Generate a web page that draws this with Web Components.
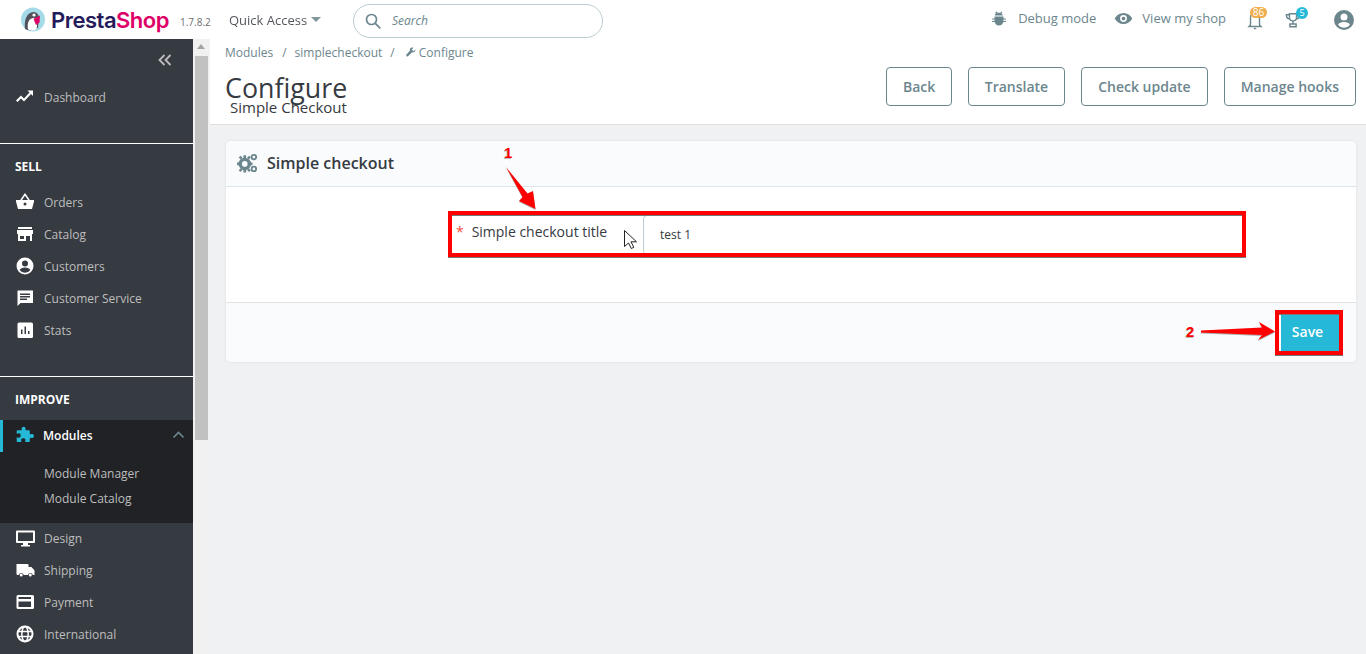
<!DOCTYPE html>
<html>
<head>
<meta charset="utf-8">
<title>Configure</title>
<style>
html,body{margin:0;height:654px;overflow:hidden;background:#eff1f2;font-family:"Open Sans",sans-serif}
</style>
</head>
<body>
<ps-app></ps-app>
<script>
const ICONS = {
  trend: `<path d="M1 13.500l5-5 3 3 5.500-6L12.500 3.500H18V9l-2-2-7 7.500-3-3-3.500 3.500z"/>`,
  basket: `<path d="M1 8h4.200L9.500 1.500h1L14.800 8H19v1.500l-2 7.500H3L1 9.500zM7 8h6l-3-4.300zM10 10.500a1.500 1.500 0 100 3 1.500 1.500 0 000-3z" fill-rule="evenodd"/>`,
  store: `<path d="M3 3h14v2H3zM2 6h16v2l0 2h-1v7h-2v-5h-4v5H3v-7H2zM5 12v3h4v-3z" fill-rule="evenodd"/>`,
  person: `<path d="M10 1.500a8.500 8.500 0 100 17 8.500 8.500 0 000-17zM10 4.500a3 3 0 110 6 3 3 0 010-6zM10 11.500c2.500 0 4.800 1 5.300 2.400A6.500 6.500 0 0110 16.800a6.500 6.500 0 01-5.300-2.900c.5-1.400 2.800-2.400 5.300-2.400z" fill-rule="evenodd"/>`,
  chat: `<path d="M2.500 2.500h15.500v12.500H5.500l-3 3zM5 5.500v1.500h10V5.500zM5 8v1.500h10V8zM5 10.500V12h7v-1.500z" fill-rule="evenodd"/>`,
  stats: `<path d="M4 2.500h12.500A1.500 1.500 0 0118 4v12.500a1.500 1.500 0 01-1.500 1.500H4a1.500 1.500 0 01-1.500-1.500V4A1.500 1.500 0 014 2.500zM6 9.500V14h1.500V9.500zM9.500 6.500V14H11V6.500zM13 11v3h1.500v-3z" fill-rule="evenodd"/>`,
  puzzle: `<path d="M7 2.500c2-1.500 4-.5 3.500 2-.1.500.3.800.8.800H14c.5 0 .8.300.8.800v2.700c0 .5.500.8 1 .5 2-1 3.500.5 3 2.200-.4 1.500-1.800 2-3 1.300-.5-.3-1 0-1 .5v3c0 .5-.3.800-.8.800h-3.200c-.8 0-.8-.6-.5-1.200.7-1.400-.3-2.700-2-2.700s-2.700 1.300-2 2.700c.3.600.2 1.200-.5 1.200H2.500c-.5 0-.8-.3-.8-.8v-3.200c0-.8.600-.9 1.200-.5 1.400.8 2.800-.2 2.800-2s-1.400-2.800-2.800-2c-.6.300-1.200.3-1.200-.5V6.100c0-.5.300-.8.800-.8H6c.6 0 .9-.4.700-.9-.3-.7-.2-1.400.3-1.900z"/>`,
  monitor: `<path d="M2 2.500h17a1 1 0 011 1V14a1 1 0 01-1 1h-6v2h2v1.500H6V17h2v-2H2a1 1 0 01-1-1V3.500a1 1 0 011-1zM3 4.500V13h15V4.500z" fill-rule="evenodd"/>`,
  truck: `<path d="M1.500 4h11a1 1 0 011 1v2h3l3 3.500V15h-1.700a2.500 2.500 0 00-4.900 0H8.700a2.500 2.500 0 00-4.900 0H2.500a1 1 0 01-1-1zM6.200 13.500a1.500 1.500 0 110 3 1.500 1.500 0 010-3zM15.300 13.500a1.500 1.500 0 110 3 1.500 1.500 0 010-3z"/>`,
  card: `<path d="M3 3h14.500A1.500 1.500 0 0119 4.500v11a1.500 1.500 0 01-1.500 1.500H3a1.500 1.500 0 01-1.500-1.500v-11A1.500 1.500 0 013 3zM3.500 5v2h12.500V5zM3.500 9.500V15h12.500V9.500z" fill-rule="evenodd"/>`,
  globe: `<circle cx="10" cy="10" r="7.500" fill="none" stroke="currentColor" stroke-width="2"/><ellipse cx="10" cy="10" rx="3.200" ry="7.500" fill="none" stroke="currentColor" stroke-width="1.500"/><path d="M2.500 6.800h15v1.400h-15zM2.500 11.800h15v1.400h-15z"/>`
};

class PsIcon extends HTMLElement {
  connectedCallback() {
    const name = this.getAttribute("name");
    const size = this.getAttribute("size") || 20;
    this.attachShadow({ mode: "open" }).innerHTML = `
      <style>:host{display:inline-flex;width:${size}px;height:${size}px}svg{width:100%;height:100%;fill:currentColor;display:block}</style>
      <svg viewBox="0 0 20 20">${ICONS[name] || ""}</svg>`;
  }
}

class PsNavItem extends HTMLElement {
  connectedCallback() {
    const icon = this.getAttribute("icon");
    this.attachShadow({ mode: "open" }).innerHTML = `
      <style>
        :host{display:flex;align-items:center;height:32px;padding-left:15px;color:#bebebe;font-size:12px}
        ps-icon{color:#fff;margin-right:9px}
      </style>
      <ps-icon name="${icon}"></ps-icon><slot></slot>`;
  }
}

class PsNavTitle extends HTMLElement {
  connectedCallback() {
    this.attachShadow({ mode: "open" }).innerHTML = `
      <style>
        :host{display:block;border-top:1px solid #fff;padding:14px 15px 0;height:44px;box-sizing:border-box;font-size:12px;font-weight:700;color:#fff;line-height:17px}
      </style><slot></slot>`;
  }
}

class PsSidebar extends HTMLElement {
  connectedCallback() {
    this.attachShadow({ mode: "open" }).innerHTML = `
      <style>
        :host{display:block;width:193px;background:#363a41;flex:none;overflow:hidden;height:615px}
        .collapse{height:42px;display:flex;justify-content:flex-end;align-items:center;padding-right:21px;box-sizing:border-box}
        .first{margin-bottom:30px}
        .gap{margin-bottom:30px}
        .active{background:#202226;height:103px;margin-bottom:-1px}
        .mod{display:flex;align-items:center;height:32px;box-sizing:border-box;padding:0 0 2px 12px;border-left:3px solid #25b9d7;color:#fff;font-size:12px;font-weight:600}
        .mod ps-icon{color:#25b9d7;margin-right:8px}
        .mod span{flex:1}
        .mod svg{margin-right:8px}
        .sub{padding:9px 0 0 44px;font-size:12px;color:#bebebe;line-height:25px}
      </style>
      <div class="collapse">
        <svg width="14" height="12" viewBox="0 0 14 12" fill="none" stroke="#bebebe" stroke-width="1.800"><path d="M6.500 1L1.500 6l5 5M12.500 1l-5 5 5 5"/></svg>
      </div>
      <div class="first"><ps-nav-item icon="trend">Dashboard</ps-nav-item></div>
      <ps-nav-title>SELL</ps-nav-title>
      <div class="gap" style="margin-top:-1px">
        <ps-nav-item icon="basket">Orders</ps-nav-item>
        <ps-nav-item icon="store">Catalog</ps-nav-item>
        <ps-nav-item icon="person">Customers</ps-nav-item>
        <ps-nav-item icon="chat">Customer Service</ps-nav-item>
        <ps-nav-item icon="stats">Stats</ps-nav-item>
      </div>
      <ps-nav-title>IMPROVE</ps-nav-title>
      <div class="active">
        <div class="mod">
          <ps-icon name="puzzle"></ps-icon><span>Modules</span>
          <svg width="13" height="8" viewBox="0 0 13 8" fill="none" stroke="#6c868e" stroke-width="1.600"><path d="M1.500 6.500l5-5 5 5"/></svg>
        </div>
        <div class="sub">Module Manager<br>Module Catalog</div>
      </div>
      <ps-nav-item icon="monitor">Design</ps-nav-item>
      <ps-nav-item icon="truck">Shipping</ps-nav-item>
      <ps-nav-item icon="card">Payment</ps-nav-item>
      <ps-nav-item icon="globe">International</ps-nav-item>`;
  }
}

class PsTopbar extends HTMLElement {
  connectedCallback() {
    this.attachShadow({ mode: "open" }).innerHTML = `
      <style>
        :host{display:flex;align-items:center;height:39px;background:#fff;flex:none;color:#6c868e;font-size:13px;position:relative}
        .logo{display:flex;align-items:center;margin-left:21px;width:159px}
        .word{font-family:"Inter","Open Sans",sans-serif;font-size:22px;font-weight:600;letter-spacing:-.5px;color:#251b5b;margin-left:6px;line-height:26px}
        .word b{font-weight:600;color:#df0067}
        .ver{font-size:10px;color:#6d6d6d;width:49px;padding-top:4px}
        .qa{color:#363a41;opacity:.85;font-size:13px;display:flex;align-items:center;width:124px}
        .caret{width:0;height:0;border:5px solid transparent;border-top-color:#6c868e;border-bottom:0;margin-left:4px}
        .search{width:248px;height:32px;border:1px solid #bbcdd2;border-radius:17px;display:flex;align-items:center;margin-top:2px}
        .search svg{margin-left:11px}
        .search span{font-style:italic;font-size:12px;color:#6c868e;margin-left:11px}
        .right{margin-left:auto;display:flex;align-items:center;height:100%}
        .link{display:flex;align-items:center;font-size:13px;margin-top:-3px}
        .ico{position:relative;display:flex}
        .badge{position:absolute;font-size:10px;line-height:11px;height:11px;border-radius:6px;color:#fff;text-align:center}
      </style>
      <div class="logo">
        <svg width="24" height="25" viewBox="0 0 24 25">
          <circle cx="12" cy="12.500" r="12" fill="#a5dbe8"/>
          <path d="M4 22C3 14 5 6 12 5c4.500 0 6 3 6 6.500l-1 9c-4 3.500-9 3.500-13 1.500z" fill="#53525c"/>
          <path d="M7 22.500c-1-6 .5-11.500 6-11.500 3.500 1 3.500 6 2.500 11-2.500 2-6 2-8.500.5z" fill="#fff"/>
          <circle cx="13" cy="8" r="1.600" fill="#fff"/>
          <path d="M12.500 12l6.500-3.500-.5 7-3.500 2.500z" fill="#df0067"/>
        </svg>
        <span class="word">Presta<b>Shop</b></span>
      </div>
      <div class="ver">1.7.8.2</div>
      <div class="qa">Quick Access<i class="caret"></i></div>
      <div class="search">
        <svg width="16" height="16" viewBox="0 0 16 16" fill="none" stroke="#6c868e" stroke-width="1.700"><circle cx="6.500" cy="6.500" r="5"/><path d="M10.300 10.300l5 5"/></svg>
        <span>Search</span>
      </div>
      <div class="right">
        <div class="link" style="margin-right:18px">
          <svg width="14" height="15" viewBox="1 1 14 15" fill="#6c868e" style="margin-right:12px"><path d="M5.300 1.500l1.200 1.300h3l1.200-1.300.7.700-1 1.100c.7.500 1.100 1 1.300 2.200H3.800c.2-1.200.6-1.700 1.300-2.200l-1-1.100zM3.500 6.500h9V8.500H15v1h-2.500V11H15v1h-2.700C11.700 14.500 10 15.500 8 15.500s-3.700-1-4.300-3.500H1v-1h2.500V9.500H1v-1h2.500z"/></svg>
          Debug mode
        </div>
        <div class="link" style="margin-right:21px">
          <svg width="19" height="13" viewBox="0 0 20 14" fill="#6c868e" style="margin-right:9px"><path d="M10 1c4 0 7.500 2.400 9.500 6-2 3.600-5.500 6-9.500 6S2.500 10.600.5 7C2.500 3.400 6 1 10 1zm0 2.300a3.700 3.700 0 100 7.400 3.700 3.700 0 000-7.400zm0 1.700a2 2 0 110 4 2 2 0 010-4z" fill-rule="evenodd"/></svg>
          View my shop
        </div>
        <div class="ico" style="margin:0 22px 0 0">
          <svg width="16" height="20" viewBox="0 0 16 20" fill="none" stroke="#6c868e" stroke-width="1.400"><path d="M3.500 15V7.500C3.500 5 5.500 3 8 3s4.500 2 4.500 4.500V15l1.500 1.500H2z"/><path d="M6.800 18.500h2.400"/></svg>
          <span class="badge" style="background:#f0ad4e;width:17px;left:3px;top:-3px">86</span>
        </div>
        <div class="ico" style="margin:0 33px 0 0">
          <svg width="16" height="18" viewBox="0 0 18 18" fill="none" stroke="#6c868e" stroke-width="1.600"><path d="M5 2h8v4c0 2.500-1.500 4-4 4S5 8.500 5 6zM5 3H1.500c0 3 1.200 4.500 3.800 5M13 3h3.500c0 3-1.200 4.500-3.800 5M9 10v3M5.500 16.500v-3h7v3z"/></svg>
          <span class="badge" style="background:#25b9d7;width:12px;height:12px;line-height:12px;left:11px;top:-4px;font-size:9px">5</span>
        </div>
        <svg width="20" height="20" viewBox="0 0 20 20" fill="#6c868e" style="margin-right:12px"><path d="M10 0a10 10 0 100 20 10 10 0 000-20zM10 3.500a3.500 3.500 0 110 7 3.500 3.500 0 010-7zM10 12c2.800 0 5.200 1 6 2.700A7.600 7.600 0 0110 17.800a7.600 7.600 0 01-6-3.100c.8-1.700 3.200-2.700 6-2.700z" fill-rule="evenodd"/></svg>
      </div>`;
  }
}

class PsScrollbar extends HTMLElement {
  connectedCallback() {
    this.attachShadow({ mode: "open" }).innerHTML = `
      <style>
        :host{display:flex;flex-direction:column;width:17px;background:#f1f1f1;flex:none;height:615px}
        .up{height:17px;display:flex;align-items:center;justify-content:center}
        .up i{width:0;height:0;border:4px solid transparent;border-bottom:5px solid #a3a3a3;border-top:0;margin-top:-2px;margin-left:-2px}
        .thumb{height:384px;background:#c1c1c1;margin-left:2px;width:13px}
      </style>
      <div class="up"><i></i></div><div class="thumb"></div>`;
  }
}

class PsButton extends HTMLElement {
  connectedCallback() {
    this.attachShadow({ mode: "open" }).innerHTML = `
      <style>
        :host{display:inline-flex;align-items:center;height:39px;box-sizing:border-box;border:1px solid #6c868e;border-radius:4px;padding:0 16px;font-size:14px;font-weight:600;color:#6c868e;background:#fff}
      </style><slot></slot>`;
  }
}

class PsPageHeader extends HTMLElement {
  connectedCallback() {
    this.attachShadow({ mode: "open" }).innerHTML = `
      <style>
        :host{display:block;background:#fff;height:86px;box-sizing:border-box;border-bottom:1px solid #dfdfdf;padding:0 10px 0 15px;position:relative}
        .crumb{font-size:12px;color:#6c868e;height:26px;display:flex;align-items:center;white-space:pre}
        .crumb i{font-style:normal;margin:0 8px}
        .crumb svg{margin:0 3px 0 3px}
        .row{display:flex;justify-content:space-between;align-items:flex-start;margin-top:2px}
        h1{margin:0;font-weight:400;font-size:26.800px;line-height:36px;color:#363a41;padding-top:3px}
        .sub{position:absolute;left:20px;top:59px;font-size:15px;line-height:19px;color:#363a41}
        .btns{display:flex;gap:16px}
      </style>
      <div class="crumb">Modules<i style="margin-left:9px">/</i>simplecheckout<i>/</i><svg width="10" height="10" viewBox="0 0 10 10" fill="#6c868e"><path d="M9.500 2.500L7.500 4.300 5.800 2.700 7.500.7C6 0 4.500.6 4 1.800c-.2.600-.2 1.200 0 1.700L.5 7.500a1 1 0 001.800 1.500l3.800-3.700c1.500.5 3.600-.7 3.400-2.800z"/></svg>Configure</div>
      <div class="row">
        <h1>Configure</h1>
        <div class="btns">
          <ps-button style="padding:0 15.500px">Back</ps-button><ps-button>Translate</ps-button><ps-button>Check update</ps-button><ps-button>Manage hooks</ps-button>
        </div>
      </div>
      <div class="sub">Simple Checkout</div>`;
  }
}

class PsPanel extends HTMLElement {
  connectedCallback() {
    this.attachShadow({ mode: "open" }).innerHTML = `
      <style>
        :host{display:block;background:#fff;border-radius:5px;box-shadow:0 0 3px rgba(0,0,0,.08);margin:16px 10px 0 16px;overflow:hidden;width:1130px}
        .head{height:46px;box-sizing:border-box;background:#fafbfc;border-bottom:1px solid #dbe6e9;display:flex;align-items:center;padding:0 0 2px 10px;font-size:16px;font-weight:600;color:#363a41}
        .head svg{margin-right:8px}
        .body{height:116px;box-sizing:border-box;padding-top:28px;border-bottom:1px solid #dfe3e5}
        .row{display:flex;height:40px;margin-left:231px;align-items:center}
        .label{width:186px;font-size:14px;color:#363a41;white-space:pre;display:flex;margin-top:-7px}
        .label i{font-style:normal;color:#f54c3e;width:15px;margin-left:-1px;margin-right:-3px}
        .input{height:40px;box-sizing:border-box;border:1px solid #bbcdd2;border-radius:4px;display:flex;align-items:center;padding:0 0 2px 16px;font-size:12px;color:#363a41;width:603px;flex:none}
        .foot{height:59px;background:#fafbfc;display:flex;justify-content:flex-end;align-items:center;padding-right:15px}
        .save{width:60px;height:38px;box-sizing:border-box;padding:0 7px 2px 0;background:#25b9d7;color:#fff;font-size:14px;font-weight:600;display:flex;align-items:center;justify-content:center}
      </style>
      <div class="head">
        <svg width="23" height="20" viewBox="0 0 23 22" fill="#6c868e"><circle cx="8.500" cy="12" r="5" fill="none" stroke="#6c868e" stroke-width="3.800"/><path d="M7 2.500h3v3H7zM7 18.500h3v3H7zM0 10.500h3v3H0zM14 10.500h3v3h-3zM1.800 5l2-2 2.200 2.200-2 2zM11 5.200l2.200-2.200 2 2-2.200 2.200zM1.800 19l2 2L6 18.800l-2-2zM11 18.800l2.200 2.200 2-2-2.200-2.200z"/><circle cx="18.500" cy="4.500" r="2.500" fill="none" stroke="#6c868e" stroke-width="2"/><circle cx="18.500" cy="17.500" r="2.500" fill="none" stroke="#6c868e" stroke-width="2"/></svg>
        Simple checkout
      </div>
      <div class="body">
        <div class="row">
          <div class="label"><i>*</i> Simple checkout title</div>
          <div class="input">test 1</div>
        </div>
      </div>
      <div class="foot"><div class="save">Save</div></div>`;
  }
}

// red markup drawn on top of the screenshot
class PsAnnotations extends HTMLElement {
  connectedCallback() {
    this.attachShadow({ mode: "open" }).innerHTML = `
      <style>
        :host{position:absolute;left:0;top:0;width:1366px;height:654px;pointer-events:none}
        .box{position:absolute;border:4px solid #f00;box-sizing:border-box;box-shadow:0 1px 0 #777,inset 0 1px 0 #777}
        .num{position:absolute;font-family:"Liberation Sans",sans-serif;font-weight:700;font-size:15px;line-height:16px;color:#f00;text-shadow:-1px 1px 0 #bbb}
        svg{position:absolute;left:0;top:0}
        .arrows{filter:drop-shadow(0 1px 0 rgba(0,0,0,.3))}
      </style>
      <div class="box" style="left:448px;top:211px;width:798px;height:46px"></div>
      <div class="box" style="left:1275px;top:310px;width:68px;height:45px"></div>
      <div class="num" style="left:504px;top:145px">1</div>
      <div class="num" style="left:1186px;top:324px">2</div>
      <svg width="1366" height="654" viewBox="0 0 1366 654">
        <g class="arrows" fill="#f00">
          <path d="M506 167L527.500 193.500 533 191 535.500 209 519 201 522.500 197Z"/>
          <path d="M1201 330.500L1262 327.500 1259 322 1275 331.500 1258 340 1262 335 1201 332.500Z"/>
        </g>
        <path d="M624.500 230.500v16l4-3.500 2.800 5.500 2.500-1.200-2.800-5.500h5.500z" fill="#fff" stroke="#222" stroke-width="1"/>
      </svg>`;
  }
}

class PsApp extends HTMLElement {
  connectedCallback() {
    this.attachShadow({ mode: "open" }).innerHTML = `
      <style>
        :host{display:flex;flex-direction:column;width:1366px;height:654px;overflow:hidden;position:relative}
        .wrap{display:flex;flex:1;min-height:0}
        main{flex:1;min-width:0}
      </style>
      <ps-topbar></ps-topbar>
      <div class="wrap">
        <ps-sidebar></ps-sidebar>
        <ps-scrollbar></ps-scrollbar>
        <main><ps-page-header></ps-page-header><ps-panel></ps-panel></main>
      </div>
      <ps-annotations></ps-annotations>`;
  }
}

customElements.define("ps-icon", PsIcon);
customElements.define("ps-nav-item", PsNavItem);
customElements.define("ps-nav-title", PsNavTitle);
customElements.define("ps-sidebar", PsSidebar);
customElements.define("ps-topbar", PsTopbar);
customElements.define("ps-scrollbar", PsScrollbar);
customElements.define("ps-button", PsButton);
customElements.define("ps-page-header", PsPageHeader);
customElements.define("ps-panel", PsPanel);
customElements.define("ps-annotations", PsAnnotations);
customElements.define("ps-app", PsApp);
</script>
</body>
</html>
